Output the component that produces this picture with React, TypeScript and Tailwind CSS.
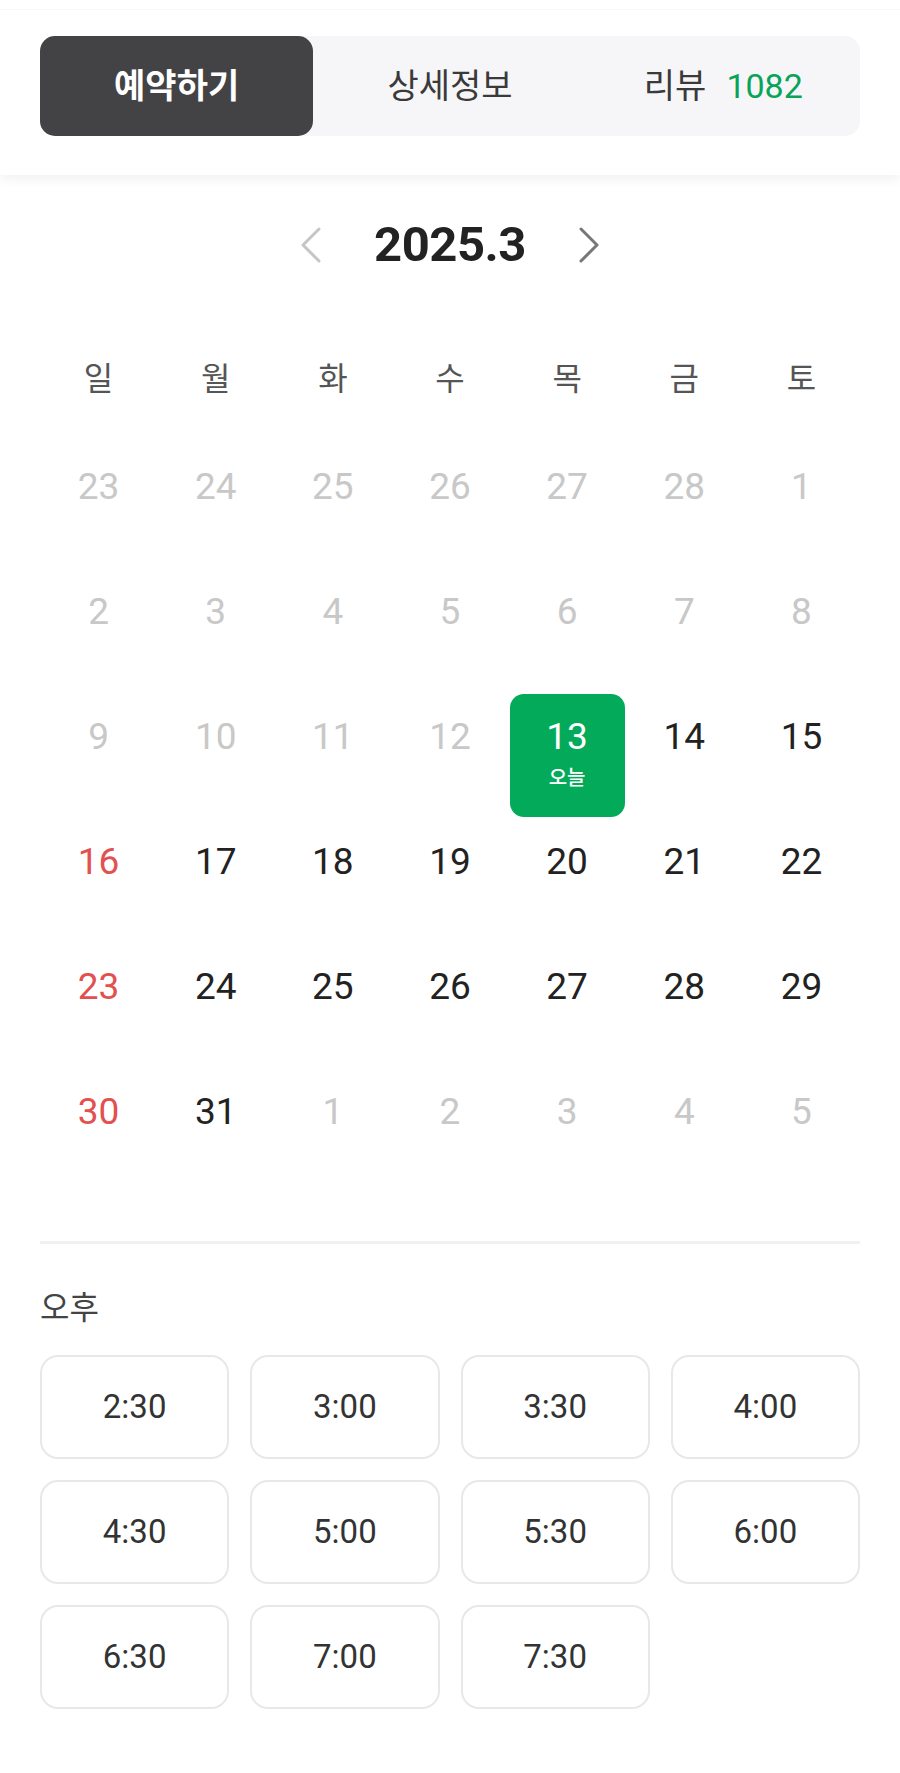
const FONT = 'font-[Roboto,"Noto_Sans_CJK_KR",sans-serif]';

type Day = { n: number; muted?: boolean; sunday?: boolean; today?: boolean };

const WEEKDAYS = ['일', '월', '화', '수', '목', '금', '토'];

const WEEKS: Day[][] = [
  [23, 24, 25, 26, 27, 28, 1].map((n) => ({ n, muted: true })),
  [2, 3, 4, 5, 6, 7, 8].map((n) => ({ n, muted: true })),
  [
    { n: 9, muted: true },
    { n: 10, muted: true },
    { n: 11, muted: true },
    { n: 12, muted: true },
    { n: 13, today: true },
    { n: 14 },
    { n: 15 },
  ],
  [16, 17, 18, 19, 20, 21, 22].map((n, i) => ({ n, sunday: i === 0 })),
  [23, 24, 25, 26, 27, 28, 29].map((n, i) => ({ n, sunday: i === 0 })),
  [
    { n: 30, sunday: true },
    { n: 31 },
    { n: 1, muted: true },
    { n: 2, muted: true },
    { n: 3, muted: true },
    { n: 4, muted: true },
    { n: 5, muted: true },
  ],
];

const TIMES = ['2:30', '3:00', '3:30', '4:00', '4:30', '5:00', '5:30', '6:00', '6:30', '7:00', '7:30'];

function Chevron({ dir, color }: { dir: 'left' | 'right'; color: string }) {
  return (
    <svg width="22" height="36" viewBox="0 0 22 36" fill="none">
      <path
        d={dir === 'left' ? 'M19 2 L3 18 L19 34' : 'M3 2 L19 18 L3 34'}
        stroke={color}
        strokeWidth="3"
        strokeLinecap="round"
        strokeLinejoin="round"
      />
    </svg>
  );
}

function DayCell({ day }: { day: Day }) {
  if (day.today) {
    return (
      <div className="h-[125px] px-[1px] py-[1px]">
        <div className="flex h-full flex-col items-center rounded-[14px] bg-[#03aa5a] pt-[21px] text-white">
          <span className="text-[37px] leading-[44px]">{day.n}</span>
          <span className="mt-[7px] text-[20px] font-medium leading-[24px]">오늘</span>
        </div>
      </div>
    );
  }
  const color = day.muted ? 'text-[#c8c8c8]' : day.sunday ? 'text-[#e35050]' : 'text-[#222222]';
  return (
    <div className="flex h-[125px] flex-col items-center pt-[22px]">
      <span className={`text-[37px] leading-[44px] ${color}`}>{day.n}</span>
    </div>
  );
}

export default function App() {
  return (
    <div className={`min-h-[1773px] w-[900px] bg-white ${FONT}`}>
      {/* Tabs header */}
      <div className="relative z-10 h-[175px] bg-white shadow-[0_5px_10px_rgba(0,0,0,0.05)]">
        <div className="h-[10px] border-b border-[#f8f8f8]" />
        <div className="mx-[40px] mt-[26px] grid h-[100px] grid-cols-3 rounded-[15px] bg-[#f6f6f8]">
          <div className="flex items-center justify-center rounded-[15px] bg-[#434345] text-[34px] font-bold text-white">
            예약하기
          </div>
          <div className="flex items-center justify-center text-[34px] text-[#3a3a3a]">상세정보</div>
          <div className="flex items-center justify-center gap-[20px] text-[34px] text-[#3a3a3a]">
            <span>리뷰</span>
            <span className="text-[34px] text-[#0aa35a]">1082</span>
          </div>
        </div>
      </div>

      {/* Month nav */}
      <div className="mt-[40px] flex h-[60px] items-center justify-center gap-[52px]">
        <Chevron dir="left" color="#c6c6c6" />
        <span className="text-[49px] font-bold tracking-[-0.5px] text-[#222222]">2025.3</span>
        <Chevron dir="right" color="#777777" />
      </div>

      {/* Calendar */}
      <div className="mx-[40px]">
        <div className="mt-[74px] grid h-[60px] grid-cols-7 items-center">
          {WEEKDAYS.map((w) => (
            <div key={w} className="text-center text-[32px] text-[#555555]">
              {w}
            </div>
          ))}
        </div>
        <div className="mt-[34px] flex flex-col">
          {WEEKS.map((week, wi) => (
            <div key={wi} className="grid grid-cols-7">
              {week.map((d, di) => (
                <DayCell key={di} day={d} />
              ))}
            </div>
          ))}
        </div>

        <div className="mt-[48px] h-[3px] bg-[#f1f1f1]" />

        <div className="mt-[46px] text-[32px] leading-[36px] text-[#444444]">오후</div>

        <div className="mt-[29px] grid grid-cols-4 gap-[21px]">
          {TIMES.map((t) => (
            <div
              key={t}
              className="flex h-[104px] items-center justify-center rounded-[18px] border-2 border-[#e8e8e8] text-[33px] text-[#333333]"
            >
              {t}
            </div>
          ))}
        </div>
      </div>
    </div>
  );
}
